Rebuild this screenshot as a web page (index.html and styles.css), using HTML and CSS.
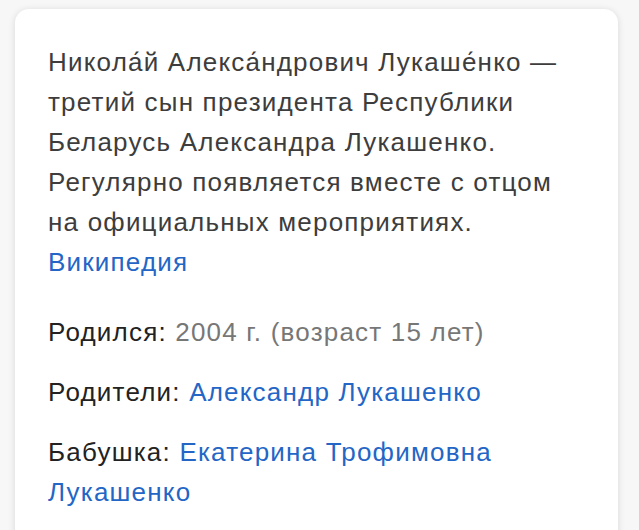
FILE: index.html
```html
<!DOCTYPE html>
<html lang="ru">
<head>
<meta charset="utf-8">
<link rel="stylesheet" href="styles.css">
</head>
<body>
<div class="card">
  <p class="desc">Никола́й Алекса́ндрович Лукаше́нко — третий сын президента Республики Беларусь Александра Лукашенко. Регулярно появляется вместе с отцом на официальных мероприятиях. <a class="link" href="#">Википедия</a></p>
  <div class="facts">
    <div class="fact"><span class="label">Родился:</span> <span class="muted">2004 г. (возраст 15 лет)</span></div>
    <div class="fact"><span class="label">Родители:</span> <a class="link" href="#">Александр Лукашенко</a></div>
    <div class="fact"><span class="label">Бабушка:</span> <a class="link" href="#">Екатерина Трофимовна Лукашенко</a></div>
  </div>
</div>
</body>
</html>
```
FILE: styles.css
```css
html, body {
  margin: 0;
  padding: 0;
  background: #f7f7f7;
}
body {
  padding: 9px 21px 0 15px;
  font-family: "Liberation Sans", Arial, sans-serif;
  font-size: 26px;
  letter-spacing: 1.2px;
  line-height: 40px;
  color: #222;
}
.card {
  background: #fff;
  border-radius: 14px;
  box-shadow: 0 1px 7px rgba(0,0,0,0.13);
  padding: 33px 40px 40px 33px;
  min-height: 560px;
}
.desc {
  margin: 0;
  color: #3d3d3d;
}
.link {
  color: #2366c6;
  text-decoration: none;
}
.facts {
  margin-top: 30px;
  display: flex;
  flex-direction: column;
  gap: 20px;
}
.label {
  color: #222;
}
.muted {
  color: #777;
}
```
